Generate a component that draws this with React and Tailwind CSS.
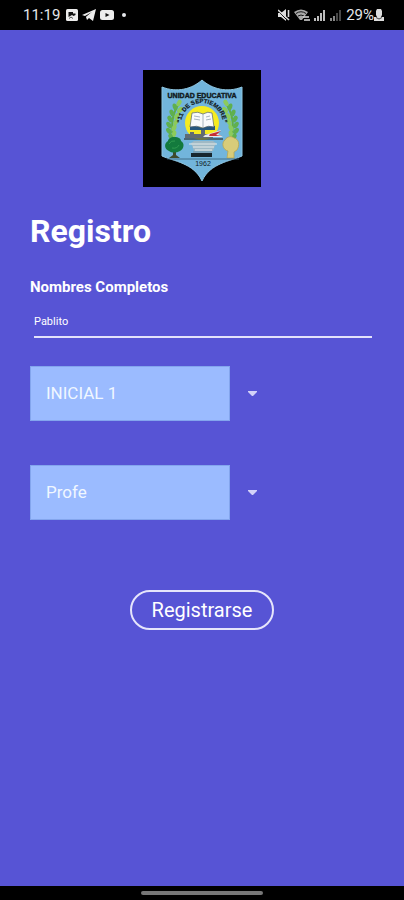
// src/App.jsx
import React, { useState } from 'react';

const leaves = [
  [36, 33, 30], [32, 37, -20], [37, 40, 40], [29, 43, -25], [34, 46, 35], [27, 49, -30],
  [33, 52, 30], [26, 55, -35], [31, 58, 25], [26, 61, -40], [31, 64, 15], [28, 67, -30],
];

const Branch = () => (
  <g>
    <path d="M37 32C30 42 27 54 31 68" fill="none" stroke="#5fae45" strokeWidth="2" />
    {leaves.map(([x, y, angle]) => (
      <ellipse
        key={`${x}-${y}`}
        cx={x}
        cy={y}
        rx="2.2"
        ry="3.6"
        fill={angle > 0 ? '#8ccb5c' : '#5fb04e'}
        transform={`rotate(${angle} ${x} ${y})`}
      />
    ))}
  </g>
);

const SchoolLogo = () => (
  <svg viewBox="0 0 118 117" className="w-full" role="img" aria-label="Unidad Educativa">
    <rect width="118" height="117" fill="#000" />
    <path
      d="M19 17C34 23 49 19 59 10C69 19 84 23 99 17V86C88 91 67 93 59 111C51 93 30 91 19 86Z"
      fill="#72b5dc"
      stroke="#8fc6e2"
      strokeWidth="1"
    />
    <Branch />
    <g transform="matrix(-1 0 0 1 119 0)">
      <Branch />
    </g>

    {/* Sun and book */}
    <circle cx="59" cy="53" r="17" fill="#f5ec20" />
    <path d="M47 56Q54 55 59 58Q65 55 72 56V60H47Z" fill="#24567e" />
    <path d="M49 43Q55 41 60 44Q65 41 69 43L71 57Q65 55 60 58Q54 55 47 57Z" fill="#f8fafc" stroke="#53616d" strokeWidth="0.7" />
    <path d="M60 44V58M51 46L57 47M51 49L57 50M63 47L67 46M63 50L68 49" stroke="#8797a5" strokeWidth="0.7" />

    {/* Train, plane and building */}
    <path d="M42 67V64H47V62H51V64H58V60H62V64H70V68H42Z" fill="#606b72" />
    <path d="M62 65L78 60L75 64L80 67L60 67Z" fill="#e5e7e8" />
    <path d="M67 64L78 61L73 65L79 66L66 66Z" fill="#c52f32" />
    <path d="M41 69H80" stroke="#3d4c54" strokeWidth="1.6" />
    <path d="M48 73L51 71H70L73 73L70 81H51Z" fill="#9fb9c5" />
    <path d="M46 74H74M50 77H71M52 80H69" stroke="#e6ecec" strokeWidth="1.2" />
    <path d="M48 83H69V87H48Z" fill="#17262f" />
    <path d="M50 82H69" stroke="#7c8a91" strokeWidth="1" />

    {/* Trees */}
    <path d="M30 75H33L33 85L37 88H26L30 85Z" fill="#3f4a2c" />
    <path d="M31 67C36 67 38 69 38 71C42 73 41 79 37 81C33 83 29 83 26 81C21 79 21 73 25 71C25 69 28 67 31 67Z" fill="#137a3d" />
    <path d="M26 74Q28 70 32 71M29 78Q34 79 36 75" fill="none" stroke="#2f9b50" strokeWidth="1" />
    <path d="M84 88L85 81C80 80 78 73 82 70C84 66 89 66 91 68C96 69 97 75 94 80L91 82V88Z" fill="#d8cc79" stroke="#b8a750" strokeWidth="0.8" />

    <path d="M24 89H96" stroke="#365e73" strokeWidth="0.8" />
    <path id="motto" d="M38 54A21 21 0 0 1 80 54" fill="none" />
    <g fontFamily="Liberation Sans, sans-serif" fontWeight="700" fill="#111a20" textAnchor="middle">
      <text x="59" y="28" fontSize="7" stroke="#111a20" strokeWidth="0.4">UNIDAD EDUCATIVA</text>
      <text fontSize="6" stroke="#111a20" strokeWidth="0.2">
        <textPath href="#motto" startOffset="50%">“11 DE SEPTIEMBRE”</textPath>
      </text>
      <text x="60" y="96" fontSize="7" fontWeight="400">1962</text>
    </g>
  </svg>
);

const StatusBar = () => (
  <header className="flex h-[30px] items-center justify-between bg-black pr-5 pl-[23px] text-[15px] text-gray-200">
    <div className="flex items-center gap-1.5">
      <span>11:19</span>
      <div className="flex items-center gap-1">
        <svg viewBox="0 0 12 12" className="size-3" aria-hidden="true">
          <rect width="12" height="12" rx="1.5" fill="#ededed" />
          <path d="M2.5 3H7V4.5H9.5V6L7.5 7L6 6L2.5 8Z" fill="#111" />
          <path d="M3 9.5L5 8L7 9.5" fill="none" stroke="#555" />
        </svg>
        <svg viewBox="0 0 14 12" className="h-3 w-3.5" aria-hidden="true">
          <path d="M0 6L14 0L11 12L7 9L5 11L4 8L10 3L3 7Z" fill="#ededed" />
          <path d="M4 8L10 3L6 8.5Z" fill="#ededed" />
        </svg>
        <svg viewBox="0 0 14 10" className="h-2.5 w-3.5" aria-hidden="true">
          <rect width="14" height="10" rx="2.5" fill="#ededed" />
          <path d="M5.5 3L9.5 5L5.5 7Z" fill="#111" />
        </svg>
      </div>
      <span className="ml-0.5 size-1 rounded-full bg-gray-200" />
    </div>

    <div className="flex items-center gap-1">
      <svg viewBox="0 0 12 12" className="size-3" aria-hidden="true">
        <path d="M0 4H3L8 0V12L3 8H0Z" fill="#ddd" />
        <path d="M0 2L10 12" stroke="#000" strokeWidth="1" />
        <path d="M0 1L11 11M10.5 1V8" stroke="#ddd" strokeWidth="1.6" />
      </svg>
      <svg viewBox="0 0 16 12" className="h-3 w-4" aria-hidden="true">
        <path d="M0 3Q7 -2 14 3L8 11H6Z" fill="#a9a9a9" />
        <path d="M2 4.5Q7 1 12 4.5M4 7Q7 5 10 7" stroke="#161616" fill="none" />
        <path d="M9 8H15M10 11H16" stroke="#ddd" strokeWidth="1.6" fill="none" />
      </svg>
      <svg viewBox="0 0 12 12" className="size-3" aria-hidden="true">
        <path d="M0 9H2V12H0ZM3 7H5V12H3ZM6 4H8V12H6ZM9 1H11V12H9Z" fill="#bcbcbc" />
      </svg>
      <svg viewBox="0 0 12 12" className="size-3" aria-hidden="true">
        <path d="M0 9H2V12H0ZM3 7H5V12H3Z" fill="#888" />
        <path d="M6 4H8V12H6ZM9 1H11V12H9Z" fill="#484848" />
      </svg>
      <div className="flex items-center">
        <span>29%</span>
        <svg viewBox="0 0 10 12" className="h-3 w-2.5" aria-hidden="true">
          <path d="M3 0H7L8 2V6L7 8H10V12H0V8H3L2 6V2Z" fill="#ddd" />
          <path d="M2 8.5L5 10L8 8.5" stroke="#444" fill="none" />
        </svg>
      </div>
    </div>
  </header>
);

const Dropdown = ({ label, value, onChange, options }) => (
  <div className="flex items-center gap-[18px]">
    <select
      aria-label={label}
      value={value}
      onChange={(e) => onChange(e.target.value)}
      className="h-[55px] w-[58%] appearance-none border border-[#83a5ed] bg-[#9bbbff] px-[15px] text-[17px] text-[#f0f7ff] outline-none"
    >
      {options.map((option) => (
        <option key={option}>{option}</option>
      ))}
    </select>
    <svg viewBox="0 0 9 5" className="w-[9px]" aria-hidden="true">
      <path d="M0 0H9V1L5 5H4L0 1Z" fill="#d3d2f8" />
    </svg>
  </div>
);

const App = () => {
  const [name, setName] = useState('Pablito');
  const [level, setLevel] = useState('INICIAL 1');
  const [role, setRole] = useState('Profe');

  return (
    <div className="flex min-h-screen flex-col bg-[#5754d5] font-[Roboto,sans-serif] text-white">
      <StatusBar />

      <main className="flex-1 px-[30px] pt-10">
        <div className="mx-auto w-[118px]">
          <SchoolLogo />
        </div>

        <form onSubmit={(e) => e.preventDefault()}>
          <h1 className="mt-6 text-[32px] leading-10 font-bold">Registro</h1>

          <label htmlFor="name" className="mt-6 block text-[15px] leading-6 font-bold">
            Nombres Completos
          </label>
          <div className="pt-3 pr-0.5 pl-1">
            <input
              id="name"
              type="text"
              value={name}
              onChange={(e) => setName(e.target.value)}
              className="block h-[27px] w-full border-b-2 border-[#e3e2fa] pb-1 text-[11px] outline-none"
            />
          </div>

          <div className="mt-7 flex flex-col gap-11">
            <Dropdown label="Nivel" value={level} onChange={setLevel} options={['INICIAL 1', 'INICIAL 2']} />
            <Dropdown label="Rol" value={role} onChange={setRole} options={['Profe', 'Estudiante']} />
          </div>

          <div className="mt-[70px] flex justify-center">
            <button type="submit" className="h-10 rounded-full border-2 border-[#e6e5fb] px-5 text-xl">
              Registrarse
            </button>
          </div>
        </form>
      </main>

      {/* Gesture bar */}
      <footer className="flex h-3.5 items-center justify-center bg-black">
        <span className="h-1 w-[122px] rounded-full bg-[#777]" />
      </footer>
    </div>
  );
};

export default App;
